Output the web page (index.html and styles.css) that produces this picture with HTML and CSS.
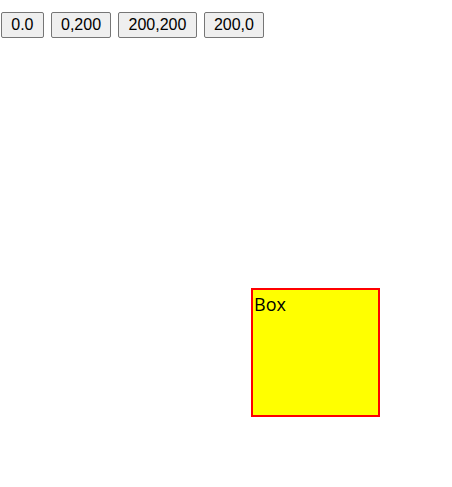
FILE: index.html
```html
<!DOCTYPE html>
<html>
<head>
<meta charset="utf-8">
<link rel="stylesheet" href="styles.css">
</head>
<body>
<div class="controls">
  <button class="btn">0.0</button>
  <button class="btn">0,200</button>
  <button class="btn">200,200</button>
  <button class="btn">200,0</button>
</div>
<div class="stage">
  <div class="box">Box</div>
</div>
</body>
</html>
```
FILE: styles.css
```css
html, body {
  margin: 0;
  padding: 0;
  background: #fff;
}
body {
  font-family: "Liberation Sans", Arial, sans-serif;
  position: relative;
  width: 452px;
  height: 487px;
  overflow: hidden;
}
.controls {
  display: flex;
  gap: 7px;
  padding: 12px 0 0 1px;
}
.btn {
  font-family: "Liberation Sans", Arial, sans-serif;
  font-size: 16px;
  color: #000;
  background: #efefef;
  border: 1px solid #767676;
  border-radius: 2px;
  padding: 2px 9.25px;
  margin: 0;
  line-height: 20px;
  height: 26px;
}
.box {
  position: absolute;
  left: 251px;
  top: 288px;
  width: 129px;
  height: 129px;
  background: #ffff00;
  border: 2px solid #ff0000;
  font-family: "Open Sans", "Segoe UI", sans-serif;
  font-size: 18px;
  line-height: 24px;
  color: #000;
  padding: 2px 0 0 1px;
  box-sizing: border-box;
}
```
